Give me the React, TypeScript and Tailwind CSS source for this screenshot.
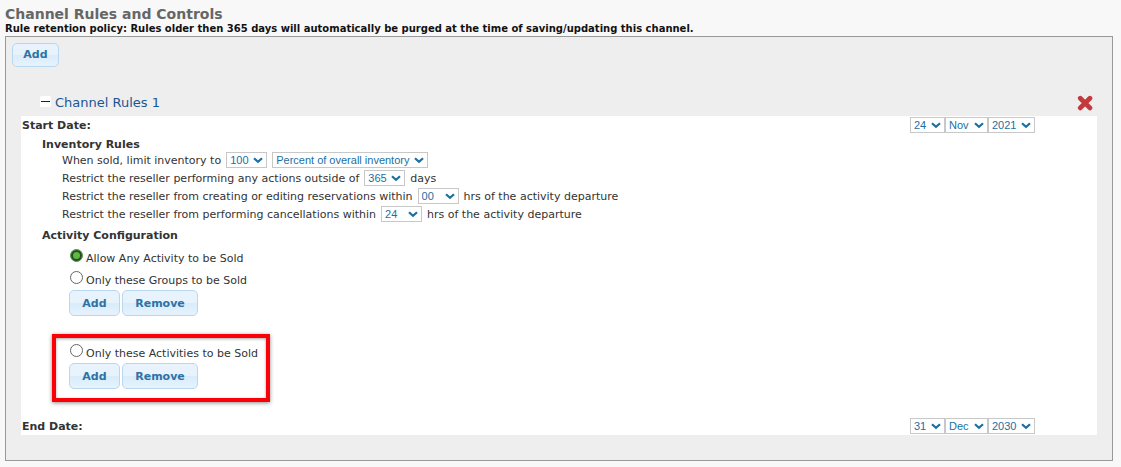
import type { ReactNode } from "react";

type SelectProps = { label: string; options: string[]; className: string };

function Select({ label, options, className }: SelectProps) {
  return (
    <span className={`relative mt-px inline-flex h-4 shrink-0 ${className}`}>
      <select
        aria-label={label}
        className="h-4 w-full appearance-none rounded-none border border-[#c8c8c8] bg-white pl-[3px] font-['Liberation_Sans',Arial,sans-serif] text-[11px] leading-[14px] text-[#1b6fa3]"
      >
        {options.map((o) => (
          <option key={o}>{o}</option>
        ))}
      </select>
      <svg
        viewBox="0 0 10 7"
        className="pointer-events-none absolute top-[5px] right-1 h-[7px] w-[10px]"
        fill="none"
        stroke="#1b6fa3"
        strokeWidth="2.2"
      >
        <path d="M1 1.2 5 4.8 9 1.2" />
      </svg>
    </span>
  );
}

function Button({ children, className }: { children: ReactNode; className: string }) {
  return (
    <button
      type="button"
      className={`rounded-[5px] border border-[#b9d7ee] bg-[linear-gradient(#e8f3fd_0%,#e6f2fc_50%,#d9ecfa_52%,#e6f3fd_100%)] text-[11px] font-bold text-[#2e72a5] ${className}`}
    >
      {children}
    </button>
  );
}

function ButtonPair() {
  return (
    <div className="-ml-px flex gap-0.5">
      <Button className="h-[26px] w-[51px] pt-[3px]">Add</Button>
      <Button className="h-[26px] w-[76px] pt-[3px]">Remove</Button>
    </div>
  );
}

function Choice({ label, checked = false }: { label: string; checked?: boolean }) {
  return (
    <label className="flex h-[22px] items-start">
      <input
        type="radio"
        name="activity"
        defaultChecked={checked}
        className="mt-[3px] size-[13px] shrink-0 appearance-none rounded-full border border-[#666] bg-white checked:border-[#3f9a2e] checked:bg-[#5cba3c] checked:shadow-[inset_0_0_0_2px_#33452f]"
      />
      <span className="ml-[3px] leading-[26px]">{label}</span>
    </label>
  );
}

function DateRow({ title, day, month, year }: { title: string; day: string; month: string; year: string }) {
  return (
    <div className="flex h-[18px] items-start justify-between pr-[62px] pl-px leading-5">
      <span className="font-bold">{title}</span>
      <div className="flex">
        <Select label={`${title} day`} options={[day]} className="w-[35px]" />
        <Select label={`${title} month`} options={[month]} className="w-[43px]" />
        <Select label={`${title} year`} options={[year]} className="w-[47px]" />
      </div>
    </div>
  );
}

function Rule({ children }: { children: ReactNode }) {
  return <div className="flex h-[18px] items-start gap-[5px] leading-5 whitespace-nowrap">{children}</div>;
}

export default function App() {
  return (
    <main className="bg-[#f8f8f8] pt-[6px] pr-2 pb-[6px] pl-[5px] font-['DejaVu_Sans',Verdana,sans-serif] text-[11px] text-[#333]">
      <h1 className="text-[14px] leading-4 font-bold text-[#666]">Channel Rules and Controls</h1>
      <p className="text-[10px] leading-[14px] font-bold text-[#111]">
        Rule retention policy: Rules older then 365 days will automatically be purged at the time of
        saving/updating this channel.
      </p>

      <section className="border border-[#999] bg-[#eee] pt-[6px] pb-[25px]">
        <Button className="ml-[6px] block h-6 w-[47px] pt-px">Add</Button>

        <div className="mt-[26px] flex h-[23px] items-start justify-between pr-[19px] pl-[34px]">
          <h2>
            <button type="button" className="flex items-start gap-1 text-[13px] leading-5 text-[#1c5590]">
              <svg viewBox="0 0 11 11" className="mt-[3px] size-[11px]">
                <rect width="11" height="11" rx="1.5" fill="#fff" />
                <path d="M1 5.5h9" stroke="#222" strokeWidth="1" />
              </svg>
              Channel Rules 1
            </button>
          </h2>
          <button type="button" aria-label="Delete" className="mt-[2px]">
            <svg
              viewBox="0 0 16 16"
              className="size-4"
              fill="none"
              stroke="#c43a3c"
              strokeWidth="4.8"
              strokeLinecap="round"
            >
              <path d="M3.3 3.3 12.9 12.9M12.9 3.3 3.3 12.9" />
            </svg>
          </button>
        </div>

        <div className="mr-[15px] ml-[15px] bg-white">
          <DateRow title="Start Date:" day="24" month="Nov" year="2021" />

          <div className="pl-[21px]">
            <h3 className="pt-1 leading-[13px] font-bold">Inventory Rules</h3>
            <div className="pl-5">
              <Rule>
                When sold, limit inventory to
                <Select label="Inventory limit" options={["100"]} className="w-[41px]" />
                <Select label="Limit unit" options={["Percent of overall inventory"]} className="w-[156px]" />
              </Rule>
              <Rule>
                Restrict the reseller performing any actions outside of
                <Select label="Days" options={["365"]} className="w-[41px]" />
                days
              </Rule>
              <Rule>
                Restrict the reseller from creating or editing reservations within
                <Select label="Reservation hours" options={["00"]} className="w-[41px]" />
                hrs of the activity departure
              </Rule>
              <Rule>
                Restrict the reseller from performing cancellations within
                <Select label="Cancellation hours" options={["24"]} className="w-[41px]" />
                hrs of the activity departure
              </Rule>
            </div>

            <h3 className="pt-[6px] pb-1 leading-[13px] font-bold">Activity Configuration</h3>
            <div className="pl-7">
              <Choice label="Allow Any Activity to be Sold" checked />
              <Choice label="Only these Groups to be Sold" />
              <ButtonPair />
            </div>
            <div className="mt-[18px] mb-[15px] ml-[10px] w-fit border-4 border-[#fb0007] pt-[3px] pr-2 pb-[9px] pl-[14px] shadow-[0_1px_4px_rgba(0,0,0,0.45),inset_0_1px_3px_rgba(0,0,0,0.35)]">
              <Choice label="Only these Activities to be Sold" />
              <ButtonPair />
            </div>
          </div>

          <DateRow title="End Date:" day="31" month="Dec" year="2030" />
        </div>
      </section>
    </main>
  );
}
